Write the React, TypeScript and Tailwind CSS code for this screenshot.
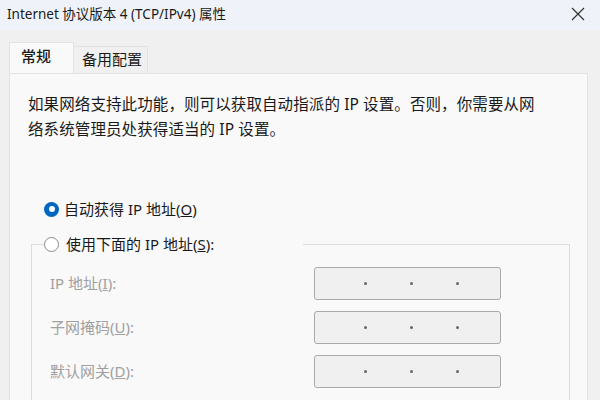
import React from "react";

const font = "font-[family-name:'Noto_Sans','Noto_Sans_CJK_SC',sans-serif]";

const fields = [
  { label: "IP 地址", key: "I" },
  { label: "子网掩码", key: "U" },
  { label: "默认网关", key: "D" },
];

function IpBox() {
  return (
    <div className="w-[187px] h-[33px] rounded-[3px] border border-[#a9a9a9] bg-[#f0f0f0] flex items-center pl-[49px] gap-[43px]">
      <span className="w-[3px] h-[3px] rounded-full bg-[#666]" />
      <span className="w-[3px] h-[3px] rounded-full bg-[#666]" />
      <span className="w-[3px] h-[3px] rounded-full bg-[#666]" />
    </div>
  );
}

function App() {
  return (
    <div className={`w-[600px] h-[400px] overflow-hidden flex flex-col bg-[#f0f0f0] text-[#1a1a1a] ${font}`}>
      <div className="h-[30px] shrink-0 bg-[#eff3f9] flex items-center justify-between pl-[7px] pr-[15px]">
        <span className="text-[13.5px] leading-none">Internet 协议版本 4 (TCP/IPv4) 属性</span>
        <svg width="14" height="14" viewBox="0 0 14 14" className="mt-[-3px]">
          <path d="M1 1L13 13M13 1L1 13" stroke="#333" strokeWidth="1.2" />
        </svg>
      </div>

      <div className="flex-1 flex flex-col pl-[9px] pr-[12px] pt-[12px]">
        <div className="flex items-end h-[31px] text-[15px] leading-none">
          <div className="w-[65px] h-[31px] bg-[#f9f9f9] border border-b-0 border-[#e3e3e3] pl-[11px] pt-[6px] font-medium">
            常规
          </div>
          <div className="w-[74px] h-[27px] bg-[#f0f0f0] border border-b-0 border-l-0 border-[#e3e3e3] pl-[8px] pt-[5px]">
            备用配置
          </div>
        </div>

        <div className="flex-1 bg-[#f9f9f9] border border-[#e3e3e3] pl-[18px] pr-[16px] pt-[18px]">
          <p className="text-[15.5px] leading-[25px] tracking-[0.1px]">
            如果网络支持此功能，则可以获取自动指派的 IP 设置。否则，你需要从网
            <br />
            络系统管理员处获得适当的 IP 设置。
          </p>

          <label className="flex items-center h-[22px] mt-[56px] ml-[16px] text-[15px]">
            <span className="w-[15px] h-[15px] rounded-full bg-[#0067c0] flex items-center justify-center">
              <span className="w-[6px] h-[6px] rounded-full bg-white" />
            </span>
            <span className="ml-[5px]">
              自动获得 IP 地址(<span className="underline">O</span>)
            </span>
          </label>

          <fieldset className="mt-[13px] ml-[3px] w-[539px] border-t border-l border-r border-[#dcdcdc] pl-[12px]">
            <legend className="w-[259px] h-[22px] flex items-center text-[15px]">
              <span className="w-[15px] h-[15px] rounded-full border border-[#8a8a8a] bg-white" />
              <span className="ml-[7px]">
                使用下面的 IP 地址(<span className="underline">S</span>):
              </span>
            </legend>
            <div className="flex flex-col gap-[11px] mt-[12px] pl-[6px] pb-[20px]">
              {fields.map((f) => (
                <div key={f.key} className="flex items-center">
                  <span className="w-[264px] text-[15px] text-[#a0a0a0]">
                    {f.label}(<span className="underline">{f.key}</span>):
                  </span>
                  <IpBox />
                </div>
              ))}
            </div>
          </fieldset>
        </div>
      </div>
    </div>
  );
}

export default App;
